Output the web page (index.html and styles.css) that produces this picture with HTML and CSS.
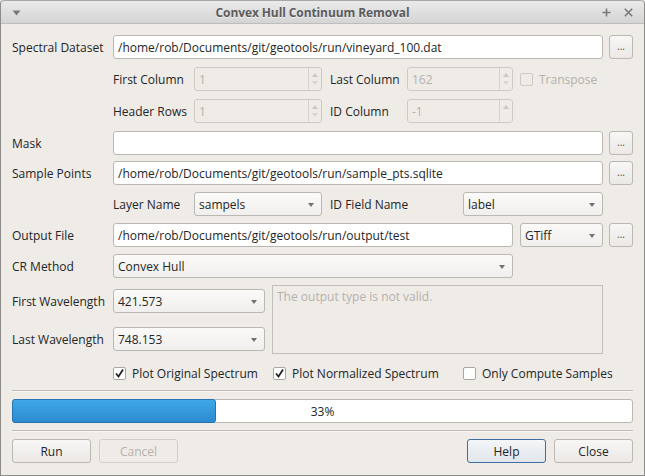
FILE: index.html
```html
<!DOCTYPE html>
<html>
<head>
<meta charset="utf-8">
<link rel="stylesheet" href="styles.css">
</head>
<body>
<div class="window">
  <div class="titlebar">
    <svg class="tb-menu" width="9" height="6" viewBox="0 0 9 6"><path d="M0.5 0.5 L8.5 0.5 L4.5 5.5 Z" fill="#7a7a7a"/></svg>
    <span class="title">Convex Hull Continuum Removal</span>
    <div class="tb-btns">
      <svg width="9" height="9" viewBox="0 0 9 9"><path d="M4.5 0.5 V8.5 M0.5 4.5 H8.5" stroke="#7a7a7a" stroke-width="1.6"/></svg>
      <svg width="9" height="9" viewBox="0 0 9 9"><path d="M0.8 0.8 L8.2 8.2 M8.2 0.8 L0.8 8.2" stroke="#7a7a7a" stroke-width="1.6"/></svg>
    </div>
  </div>
  <div class="body">
    <div class="form">
      <div class="row">
        <span class="lbl c0">Spectral Dataset</span>
        <div class="edit grow">/home/rob/Documents/git/geotools/run/vineyard_100.dat</div>
        <div class="btn dots">...</div>
      </div>
      <div class="row plus1">
        <span class="c0"></span>
        <span class="lbl c1">First Column</span>
        <div class="spin c2"><span class="val">1</span><span class="arrows"><i class="up"></i><i class="dn"></i></span></div>
        <span class="lbl c3">Last Column</span>
        <div class="spin c4"><span class="val">162</span><span class="arrows"><i class="up"></i><i class="dn"></i></span></div>
        <span class="check disabled"><span class="box"></span>Transpose</span>
      </div>
      <div class="row plus1">
        <span class="c0"></span>
        <span class="lbl c1">Header Rows</span>
        <div class="spin c2"><span class="val">1</span><span class="arrows"><i class="up"></i><i class="dn"></i></span></div>
        <span class="lbl c3">ID Column</span>
        <div class="spin c4"><span class="val">-1</span><span class="arrows"><i class="up"></i></span></div>
      </div>
      <div class="row plus1">
        <span class="lbl c0">Mask</span>
        <div class="edit grow"></div>
        <div class="btn dots">...</div>
      </div>
      <div class="row minus1">
        <span class="lbl c0">Sample Points</span>
        <div class="edit grow">/home/rob/Documents/git/geotools/run/sample_pts.sqlite</div>
        <div class="btn dots">...</div>
      </div>
      <div class="row">
        <span class="c0"></span>
        <span class="lbl c1">Layer Name</span>
        <div class="combo c2">sampels</div>
        <span class="lbl c3b">ID Field Name</span>
        <div class="combo c5">label</div>
      </div>
      <div class="row">
        <span class="lbl c0">Output File</span>
        <div class="edit w400">/home/rob/Documents/git/geotools/run/output/test</div>
        <div class="combo gtiff">GTiff</div>
        <div class="btn dots">...</div>
      </div>
      <div class="row">
        <span class="lbl c0">CR Method</span>
        <div class="combo w400">Convex Hull</div>
      </div>
      <div class="wave">
        <div class="wave-left">
          <div class="row">
            <span class="lbl c0">First Wavelength</span>
            <div class="combo wl">421.573</div>
          </div>
          <div class="row">
            <span class="lbl c0">Last Wavelength</span>
            <div class="combo wl">748.153</div>
          </div>
        </div>
        <div class="message">The output type is not valid.</div>
      </div>
      <div class="row checks">
        <span class="c0"></span>
        <span class="check ck1"><span class="box on"><svg width="11" height="11" viewBox="0 0 11 11"><path d="M2 5.5 L4.5 8.5 L9 1.5" fill="none" stroke="#222" stroke-width="1.8"/></svg></span>Plot Original Spectrum</span>
        <span class="check ck2"><span class="box on"><svg width="11" height="11" viewBox="0 0 11 11"><path d="M2 5.5 L4.5 8.5 L9 1.5" fill="none" stroke="#222" stroke-width="1.8"/></svg></span>Plot Normalized Spectrum</span>
        <span class="check"><span class="box"></span>Only Compute Samples</span>
      </div>
    </div>
    <div class="sep sep1"></div>
    <div class="progress">
      <div class="chunk" style="width:33%"></div>
      <span class="pct">33%</span>
    </div>
    <div class="sep sep2"></div>
    <div class="buttons">
      <div class="btn push">Run</div>
      <div class="btn push disabled">Cancel</div>
      <div class="spacer"></div>
      <div class="btn push default">Help</div>
      <div class="btn push">Close</div>
    </div>
  </div>
</div>
</body>
</html>
```
FILE: styles.css
```css
html, body {
  margin: 0;
  padding: 0;
  background: #efebe7;
}
body {
  font-family: "Open Sans", "Noto Sans", sans-serif;
  font-size: 12px;
  color: #232627;
}
.window {
  width: 645px;
  height: 476px;
  box-sizing: border-box;
  border: 1px solid #8e8c8a;
  border-top: none;
  border-radius: 4px 4px 0 0;
  background: #efebe7;
  display: flex;
  flex-direction: column;
  overflow: hidden;
}
.titlebar {
  height: 24px;
  box-sizing: border-box;
  background: linear-gradient(#eaeaea, #d4d4d4);
  border-top: 1px solid #a8a8a8;
  border-bottom: 1px solid #bdbdbd;
  border-radius: 4px 4px 0 0;
  display: flex;
  align-items: center;
  position: relative;
  padding: 0 11px 0 11px;
}
.tb-menu {
  margin-top: 1px;
}
.title {
  flex: 1;
  text-align: center;
  font-weight: bold;
  color: #5c5c5c;
  text-shadow: 0 1px 0 rgba(255,255,255,0.6);
  font-size: 12px;
  margin-left: 2px;
  letter-spacing: -0.1px;
}
.tb-btns {
  display: flex;
  gap: 13px;
  align-items: center;
}
.body {
  flex: 1;
  display: flex;
  flex-direction: column;
  padding: 11px 11px 0 11px;
}
.form {
  display: flex;
  flex-direction: column;
  gap: 7px;
}
.row {
  display: flex;
  align-items: center;
  height: 24px;
}
.row.plus1 { margin-top: 1px; }
.row.minus1 { margin-top: -1px; }
.lbl { white-space: nowrap; }
.c0 { width: 101px; flex: none; }
.c1 { width: 81px; flex: none; }
.c2 { width: 128px; flex: none; }
.c3 { width: 77px; flex: none; margin-left: 8px; }
.c3b { width: 133px; flex: none; margin-left: 8px; }
.c4 { width: 106px; flex: none; }
.c5 { width: 140px; flex: none; }
.grow { flex: 1; }
.w400 { width: 400px; flex: none; }
.gtiff { width: 83px; flex: none; margin-left: 7px; }
.wl { width: 152px; flex: none; }

.edit, .combo, .spin {
  height: 24px;
  box-sizing: border-box;
  border: 1px solid #bbb7b3;
  border-radius: 3px;
  background: #fff;
  padding: 0 4px 0 4px;
  display: flex;
  align-items: center;
  white-space: nowrap;
  overflow: hidden;
}
.combo {
  position: relative;
  background: linear-gradient(#fbfaf9, #f1efed);
  padding-left: 4px;
}
.combo::after {
  content: "";
  position: absolute;
  right: 7px;
  top: 10px;
  border-left: 3.5px solid transparent;
  border-right: 3.5px solid transparent;
  border-top: 4px solid #727272;
}
.spin {
  background: #efebe7;
  border-color: #cdc9c5;
  color: #b5b1ad;
  padding: 0 0 0 4px;
  position: relative;
}
.spin .val { flex: 1; }
.spin .arrows {
  width: 12px;
  height: 22px;
  border-left: 1px solid #d6d2ce;
  position: relative;
}
.spin .up, .spin .dn {
  position: absolute;
  left: 3px;
  border-left: 3.5px solid transparent;
  border-right: 3.5px solid transparent;
}
.spin .up { top: 5px; border-bottom: 4px solid #cbc7c3; }
.spin .dn { bottom: 5px; border-top: 4px solid #d9d5d1; }

.btn {
  box-sizing: border-box;
  border: 1px solid #bbb7b3;
  border-radius: 3px;
  background: linear-gradient(#f8f7f6, #ebe8e5);
  display: flex;
  align-items: center;
  justify-content: center;
}
.dots {
  width: 24px;
  height: 24px;
  margin-left: 6px;
  flex: none;
  font-size: 10px;
  color: #444;
  padding-bottom: 2px;
}

.check {
  display: flex;
  align-items: center;
  white-space: nowrap;
}
.check .box {
  width: 13px;
  height: 13px;
  box-sizing: border-box;
  border: 1px solid #aaa6a2;
  border-radius: 2px;
  background: #fff;
  margin-right: 6px;
  display: flex;
  align-items: center;
  justify-content: center;
  flex: none;
}
.check.disabled {
  color: #b5b1ad;
  margin-left: 7px;
}
.check.disabled .box {
  border-color: #cdc9c5;
  background: #efebe7;
}
.ck1 { width: 160px; flex: none; }
.ck2 { width: 190px; flex: none; }

.wave {
  display: flex;
}
.wave-left {
  display: flex;
  flex-direction: column;
  padding-top: 4px;
  gap: 14px;
}
.message {
  margin-left: 7px;
  width: 331px;
  height: 69px;
  box-sizing: border-box;
  border: 1px solid #c2beba;
  color: #b5b1ad;
  padding: 2px 4px;
}

.sep {
  height: 1px;
  background: #bdb9b5;
  border-bottom: 1px solid #f8f6f4;
}
.sep1 { margin-top: 5px; }
.progress {
  margin-top: 7px;
  height: 24px;
  box-sizing: border-box;
  border: 1px solid #bbb7b3;
  border-radius: 3px;
  background: #fff;
  position: relative;
  display: flex;
  align-items: center;
  justify-content: center;
}
.chunk {
  position: absolute;
  left: -1px;
  top: -1px;
  bottom: -1px;
  box-sizing: border-box;
  border: 1px solid #2673b3;
  border-radius: 3px;
  background: linear-gradient(#3ea8e9, #2d8bd0);
}
.pct { position: relative; }
.sep2 { margin-top: 7px; }
.buttons {
  margin-top: 7px;
  display: flex;
  gap: 8px;
}
.push {
  width: 79px;
  height: 24px;
}
.push.disabled {
  color: #b5b1ad;
  border-color: #d2cecb;
  background: #efebe7;
}
.push.default {
  border-color: #3f6f9e;
  background: linear-gradient(#f4f6f8, #e1e6eb);
}
.spacer { flex: 1; }
```
